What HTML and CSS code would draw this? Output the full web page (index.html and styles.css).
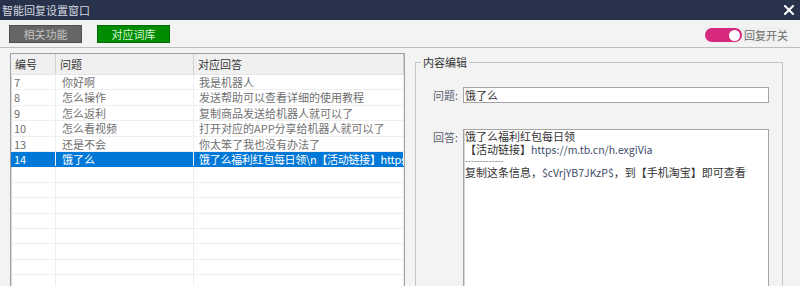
FILE: index.html
```html
<!DOCTYPE html>
<html lang="zh-CN">
<head>
<meta charset="utf-8">
<title>智能回复设置窗口</title>
<link rel="stylesheet" href="styles.css">
</head>
<body>
<div class="window">
  <div class="titlebar">
    <span class="title">智能回复设置窗口</span>
    <svg class="close" width="10" height="10" viewBox="0 0 10 10"><path d="M1 1L9 9M9 1L1 9" stroke="#ffffff" stroke-width="2" stroke-linecap="square"/></svg>
  </div>
  <div class="toolbar">
    <button class="btn btn-gray">相关功能</button>
    <button class="btn btn-green">对应词库</button>
    <div class="switch-wrap">
      <span class="switch"><span class="knob"></span></span>
      <span class="switch-label">回复开关</span>
    </div>
  </div>
  <div class="main">
    <div class="grid">
      <div class="row head">
        <div class="c c1">编号</div><div class="c c2">问题</div><div class="c c3">对应回答</div>
      </div>
      <div class="row"><div class="c c1">7</div><div class="c c2">你好啊</div><div class="c c3">我是机器人</div></div>
      <div class="row"><div class="c c1">8</div><div class="c c2">怎么操作</div><div class="c c3">发送帮助可以查看详细的使用教程</div></div>
      <div class="row"><div class="c c1">9</div><div class="c c2">怎么返利</div><div class="c c3">复制商品发送给机器人就可以了</div></div>
      <div class="row"><div class="c c1">10</div><div class="c c2">怎么看视频</div><div class="c c3">打开对应的APP分享给机器人就可以了</div></div>
      <div class="row"><div class="c c1">13</div><div class="c c2">还是不会</div><div class="c c3">你太笨了我也没有办法了</div></div>
      <div class="row sel"><div class="c c1">14</div><div class="c c2">饿了么</div><div class="c c3">饿了么福利红包每日领\n【活动链接】https://m.tb.cn/h.exgiVia</div></div>
      <div class="row"><div class="c c1"></div><div class="c c2"></div><div class="c c3"></div></div>
      <div class="row"><div class="c c1"></div><div class="c c2"></div><div class="c c3"></div></div>
      <div class="row"><div class="c c1"></div><div class="c c2"></div><div class="c c3"></div></div>
      <div class="row"><div class="c c1"></div><div class="c c2"></div><div class="c c3"></div></div>
      <div class="row"><div class="c c1"></div><div class="c c2"></div><div class="c c3"></div></div>
      <div class="row"><div class="c c1"></div><div class="c c2"></div><div class="c c3"></div></div>
      <div class="row"><div class="c c1"></div><div class="c c2"></div><div class="c c3"></div></div>
      <div class="row"><div class="c c1"></div><div class="c c2"></div><div class="c c3"></div></div>
      <div class="row"><div class="c c1"></div><div class="c c2"></div><div class="c c3"></div></div>
    </div>
    <fieldset class="group">
      <legend>内容编辑</legend>
      <div class="form-row">
        <label class="lbl">问题:</label>
        <div class="input">饿了么</div>
      </div>
      <div class="form-row answer">
        <label class="lbl">回答:</label>
        <div class="textarea">
          <div class="ln">饿了么福利红包每日领</div>
          <div class="ln">【活动链接】<span class="lat">https://m.tb.cn/h.exgiVia</span></div>
          <div class="ln dash">-------------</div>
          <div class="ln">复制这条信息，<span class="lat">$cVrjYB7JKzP$</span>，到【手机淘宝】即可查看</div>
        </div>
      </div>
    </fieldset>
  </div>
</div>
</body>
</html>
```

FILE: styles.css
```css
* { box-sizing: border-box; }
html, body { margin: 0; padding: 0; }
body {
  width: 800px;
  height: 286px;
  overflow: hidden;
  background: #f3f3f3;
  font-family: "Noto Sans CJK SC", "Microsoft YaHei", sans-serif;
  font-size: 11px;
  color: #555;
}
.window { width: 800px; height: 286px; overflow: hidden; }

.titlebar {
  height: 20px;
  background: #28324a;
  display: flex;
  align-items: center;
  justify-content: space-between;
  padding: 0 6px 0 2px;
}
.title { color: #d4d8e0; font-size: 11px; line-height: 20px; }
.close { display: block; }

.toolbar {
  height: 28px;
  display: flex;
  align-items: flex-start;
  padding: 5px 0 0 9px;
  border-bottom: 1px solid #bdbdbd;
}
.btn {
  font-family: inherit;
  font-size: 11px;
  line-height: 15px;
  height: 18px;
  width: 73px;
  padding: 0;
  margin: 0;
  border: 1px solid;
}
.btn-gray { background: #666666; border-color: #4e4e4e; color: #c4c4c4; }
.btn-green { background: #008c00; border-color: #006e00; color: #d6f5d6; margin-left: 15px; }

.switch-wrap {
  margin-left: auto;
  margin-right: 12px;
  margin-top: 2px;
  display: flex;
  align-items: center;
  background: #efefef;
  padding: 1px 0;
}
.switch {
  width: 37px;
  height: 14px;
  border-radius: 7px;
  background: #d6287c;
  display: flex;
  align-items: center;
  justify-content: flex-end;
  padding-right: 2px;
}
.knob { width: 11px; height: 11px; border-radius: 50%; background: #fff; }
.switch-label { color: #6a6a6a; margin-left: 2px; line-height: 14px; }

.main {
  display: flex;
  align-items: flex-start;
}

.grid {
  margin: 5px 0 0 10px;
  width: 395px;
  height: 240px;
  background: #fff;
  border: 1px solid #a0a0a0;
  box-shadow: inset 1px 1px 0 #d8d8d8;
  overflow: hidden;
}
.row {
  display: flex;
  height: 15.4px;
  border-bottom: 1px solid #eeeeee;
  color: #707070;
}
.row.head {
  height: 21px;
  background: #f0f0f0;
  border-bottom: 1px solid #e4e4e4;
  color: #333;
}
.c {
  padding-left: 3px;
  line-height: 14px;
  white-space: nowrap;
  overflow: hidden;
  border-right: 1px solid #eeeeee;
}
.head .c { line-height: 20px; border-right-color: #d0d0d0; padding-left: 4px; }
.c1 { width: 45px; }
.c2 { width: 138px; padding-left: 6px; }
.c3 { flex: 1; padding-left: 5px; }
.row.sel { background: #0078d7; color: #ffffff; border-bottom-color: #0078d7; }
.row.sel .c { border-right-color: #e8f0fa; }
.row.sel .c3 { letter-spacing: -0.3px; }

.group {
  margin: 8px 0 0 10px;
  width: 368px;
  height: 240px;
  border: 1px solid #c4c4c4;
  padding: 18px 0 0 0;
  min-width: 0;
}
.group legend {
  margin-left: 5px;
  padding: 0 2px;
  font-size: 11px;
  line-height: 13px;
  color: #333;
}
.form-row {
  display: grid;
  grid-template-columns: 47px 306px;
  align-items: center;
}
.form-row.answer { margin-top: 26px; align-items: start; }
.lbl {
  text-align: right;
  padding-right: 5px;
  color: #5a6070;
  line-height: 16px;
}
.input {
  height: 16px;
  background: #fff;
  border: 1px solid #a4a4a4;
  line-height: 14px;
  padding-left: 1px;
  color: #333;
}
.textarea {
  height: 170px;
  background: #fff;
  border: 1px solid #a4a4a4;
  box-shadow: inset 1px 0 0 #d6d6d6;
  padding: 0 0 0 1px;
  color: #333;
}
.ln { line-height: 13px; white-space: nowrap; }
.lat { color: #3e4c6c; font-size: 10.5px; }
.dash { font-family: "Liberation Sans", sans-serif; font-size: 8px; line-height: 10px; letter-spacing: 0.3px; color: #555; }
```
